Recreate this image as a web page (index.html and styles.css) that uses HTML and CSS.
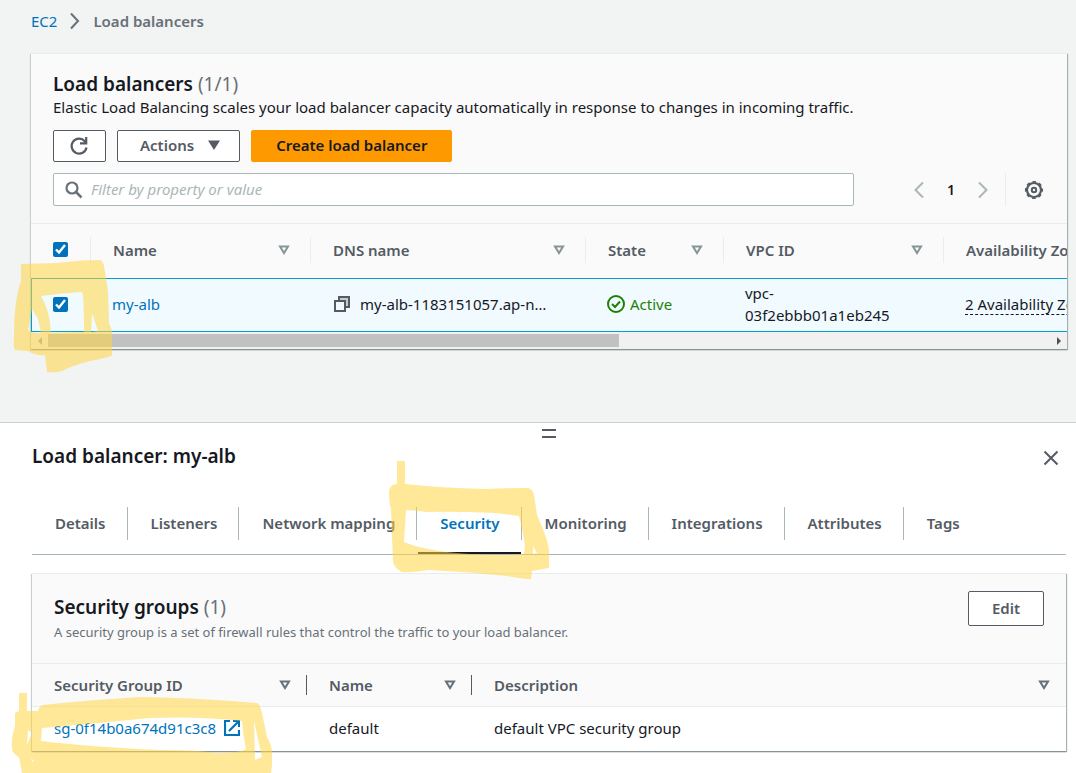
FILE: index.html
```html
<!DOCTYPE html>
<html lang="en">
<head>
<meta charset="utf-8">
<title>Load balancers</title>
<link rel="stylesheet" href="styles.css">
</head>
<body>
<svg class="defs" aria-hidden="true">
  <symbol id="sort" viewBox="0 0 12 10"><path d="M2 1.500h8L6 8z" fill="none" stroke="currentColor" stroke-width="2"/></symbol>
</svg>
<div class="page">
  <main class="main">
    <nav class="breadcrumb" aria-label="Breadcrumb">
      <a href="#">EC2</a>
      <svg width="10" height="18" viewBox="0 0 10 18" aria-hidden="true"><path d="M1 1.500l7 7.500-7 7.500" fill="none" stroke="#687078" stroke-width="2"/></svg>
      <span class="current">Load balancers</span>
    </nav>

    <section class="card balancers">
      <header class="card-head">
        <h1 class="title">Load balancers <span class="count">(1/1)</span></h1>
        <p class="lead">Elastic Load Balancing scales your load balancer capacity automatically in response to changes in incoming traffic.</p>
        <div class="actions">
          <button class="btn refresh" aria-label="Refresh">
            <svg width="20" height="20" viewBox="0 0 20 20" aria-hidden="true"><path d="M17.500 11.500A7.500 7.500 0 1 1 15.800 5.200L17 7" fill="none" stroke="#545b64" stroke-width="2.200"/><path d="M17.200 1v6.300H11" fill="none" stroke="#545b64" stroke-width="2.200"/></svg>
          </button>
          <button class="btn menu">Actions
            <svg width="12" height="10" viewBox="0 0 12 10" aria-hidden="true"><path d="M0 .5h12L6 10z" fill="#545b64"/></svg>
          </button>
          <button class="btn primary">Create load balancer</button>
        </div>
        <div class="tools">
          <label class="filter">
            <svg width="18" height="18" viewBox="0 0 18 18" aria-hidden="true"><circle cx="7" cy="7" r="5.500" fill="none" stroke="#687078" stroke-width="2.200"/><path d="M11 11l5.500 5.500" stroke="#687078" stroke-width="2.500"/></svg>
            <input type="text" placeholder="Filter by property or value" aria-label="Filter by property or value">
          </label>
          <div class="pager">
            <button class="icon-btn" aria-label="Previous page"><svg width="12" height="18" viewBox="0 0 12 18"><path d="M10 1.500L2.500 9l7.500 7.500" fill="none" stroke="#aab7b8" stroke-width="2"/></svg></button>
            <span class="page-no">1</span>
            <button class="icon-btn" aria-label="Next page"><svg width="12" height="18" viewBox="0 0 12 18"><path d="M2 1.500L9.500 9 2 16.500" fill="none" stroke="#aab7b8" stroke-width="2"/></svg></button>
          </div>
          <button class="icon-btn settings" aria-label="Preferences">
            <svg width="20" height="20" viewBox="0 0 20 20"><circle cx="10" cy="10" r="7" fill="none" stroke="#545b64" stroke-width="2.200"/><circle cx="10" cy="10" r="8.300" fill="none" stroke="#545b64" stroke-width="1.600" stroke-dasharray="3.500 3.020" stroke-dashoffset="1.750"/><circle cx="10" cy="10" r="2.200" fill="none" stroke="#545b64" stroke-width="2"/></svg>
          </button>
        </div>
      </header>
      <div class="scroll">
        <table class="grid wide">
          <colgroup><col class="c-check"><col class="c-name"><col class="c-dns"><col class="c-state"><col class="c-vpc"><col class="c-zone"></colgroup>
          <thead>
            <tr>
              <th><div class="cell"><input type="checkbox" checked aria-label="Select all"></div></th>
              <th><div class="cell">Name<svg class="sort"><use href="#sort"/></svg></div></th>
              <th><div class="cell">DNS name<svg class="sort"><use href="#sort"/></svg></div></th>
              <th><div class="cell">State<svg class="sort"><use href="#sort"/></svg></div></th>
              <th><div class="cell">VPC ID<svg class="sort"><use href="#sort"/></svg></div></th>
              <th><div class="cell">Availability Zones</div></th>
            </tr>
          </thead>
          <tbody>
            <tr>
              <td><input type="checkbox" checked aria-label="Select my-alb"></td>
              <td><a href="#">my-alb</a></td>
              <td><span class="with-icon dns"><svg width="16" height="16" viewBox="0 0 16 16" aria-hidden="true"><path d="M5 1h10v10h-4V5H5z" fill="#c8ccd0" stroke="#545b64" stroke-width="2"/><path d="M1 5h10v10H1z" fill="none" stroke="#545b64" stroke-width="2"/></svg>my-alb-1183151057.ap-n…</span></td>
              <td><span class="with-icon active"><svg width="18" height="18" viewBox="0 0 18 18" aria-hidden="true"><circle cx="9" cy="9" r="8" fill="none" stroke="#1d8102" stroke-width="2"/><path d="M5 9l3 3 5-5.500" fill="none" stroke="#1d8102" stroke-width="2"/></svg>Active</span></td>
              <td>vpc-<br>03f2ebbb01a1eb245</td>
              <td><span class="dashed">2 Availability Zones</span></td>
            </tr>
          </tbody>
        </table>
      </div>
      <div class="scrollbar" aria-hidden="true"><i class="arrow left"></i><span class="track"><span class="thumb"></span></span><i class="arrow right"></i></div>
      <svg class="marker marker-row" width="100" height="114" viewBox="13 258 100 114" aria-hidden="true"><path fill-rule="evenodd" d="M21 263L58 262Q80 259 100 259Q103 260 104 265L108 290L109 322L112 330V354Q111 356 90 360Q74 364 62 370Q55 372 47 371L45 354Q36 355 28 350L15 349Q13 347 14 335Q14 300 21 280ZM41 295Q62 292 82 291Q84 295 84 331L51 332Q50 310 41 295ZM32 308L38 318 41 332Q32 333 28 329ZM92 312L98 330 91 331Z"/></svg>
    </section>
  </main>

  <section class="panel">
    <div class="handle" aria-hidden="true"></div>
    <header class="panel-head">
      <h2 class="title">Load balancer: my-alb</h2>
      <button class="icon-btn close" aria-label="Close"><svg width="16" height="16" viewBox="0 0 16 16"><path d="M1.500 1.500l13 13M14.500 1.500l-13 13" stroke="#545b64" stroke-width="2"/></svg></button>
    </header>
    <nav class="tabs" role="tablist">
      <button class="tab" role="tab">Details</button>
      <button class="tab" role="tab">Listeners</button>
      <button class="tab" role="tab">Network mapping</button>
      <button class="tab selected" role="tab" aria-selected="true">Security</button>
      <button class="tab" role="tab">Monitoring</button>
      <button class="tab" role="tab">Integrations</button>
      <button class="tab" role="tab">Attributes</button>
      <button class="tab" role="tab">Tags</button>
      <svg class="marker marker-tab" width="162" height="120" viewBox="388 460 162 120" aria-hidden="true"><path fill-rule="evenodd" d="M397 461H405V484Q440 488 485 489Q510 488 528 488Q533 489 534 495L537 515Q549 542 549 551V568L532 571 531 579Q524 579 507 576Q470 572 428 570Q410 573 402 572Q395 569 393 562L391 508Q389 505 389 490Q391 484 397 484ZM406 510Q420 511 427 512Q490 511 519 516Q523 530 525 546L524 554Q500 556 470 554Q425 551 404 542ZM533 546L537 553 533 554Z"/></svg>
    </nav>

    <section class="card groups">
      <header class="groups-head">
        <div>
          <h2 class="title">Security groups <span class="count">(1)</span></h2>
          <p class="note">A security group is a set of firewall rules that control the traffic to your load balancer.</p>
        </div>
        <button class="btn edit">Edit</button>
      </header>
      <table class="grid small">
        <colgroup><col class="g-id"><col class="g-name"><col></colgroup>
        <thead>
          <tr>
            <th><div class="cell">Security Group ID<svg class="sort"><use href="#sort"/></svg></div></th>
            <th><div class="cell">Name<svg class="sort"><use href="#sort"/></svg></div></th>
            <th><div class="cell">Description<svg class="sort"><use href="#sort"/></svg></div></th>
          </tr>
        </thead>
        <tbody>
          <tr>
            <td><a class="with-icon external" href="#">sg-0f14b0a674d91c3c8<svg width="16" height="16" viewBox="0 0 16 16" aria-hidden="true"><path d="M6 1H1v14h14v-5M9 1h6v6M15 1L5 11" fill="none" stroke="#0073bb" stroke-width="2.200"/></svg></a></td>
            <td>default</td>
            <td>default VPC security group</td>
          </tr>
        </tbody>
      </table>
      <svg class="marker marker-group" width="262" height="81" viewBox="11 692 262 81" aria-hidden="true"><path fill-rule="evenodd" d="M19 693H27V711H38Q39 706 43 705Q90 700 140 697Q200 698 257 703Q260 704 262 713L267 737Q271 744 272 750V765L271 773H22L19 757Q12 754 12 748Q11 738 15 726V713L19 711ZM42 728Q90 724 150 718Q200 716 242 721Q243 735 246 749Q240 753 215 753Q200 750 160 750Q90 747 41 741ZM254 721L262 757 255 760ZM28 730L32 733 27 745ZM30 757L34 761 33 762Z"/></svg>
    </section>
  </section>
</div>
</body>
</html>
```
FILE: styles.css
```css
* { box-sizing: border-box; }
body {
  margin: 0;
  background: #fff;
  color: #16191f;
  font-family: "Noto Sans", "Open Sans", sans-serif;
  font-size: 15px;
  line-height: 22px;
}
h1, h2, p { margin: 0; }
button, input { font: inherit; margin: 0; }
button { cursor: pointer; }
svg { display: block; flex: none; }
a { color: #0073bb; text-decoration: none; }
.defs { display: none; }
.page { min-height: 100vh; display: flex; flex-direction: column; overflow: hidden; }

.main { background: #f2f3f3; padding: 0 9px 73px 31px; }
.breadcrumb { display: flex; align-items: center; gap: 13px; padding: 10px 0 21px; }
.breadcrumb .current { color: #687078; font-weight: 600; }

.card {
  position: relative;
  background: #fafafa;
  border-top: 1px solid #eaeded;
  box-shadow: 0 1px 1px #879596, 1px 1px 1px #aab7b8, -1px 1px 1px #d5dbdb;
}
.title { font-size: 19px; line-height: 24px; font-weight: 600; }
.count { color: #687078; font-weight: 400; }

.card-head { padding: 18px 22px 17px; }
.lead { line-height: 22px; }
.actions { display: flex; gap: 11px; margin-top: 12px; }
.btn {
  display: flex;
  align-items: center;
  justify-content: center;
  height: 32px;
  padding: 0 23px 2px;
  background: #fff;
  border: 1px solid #545b64;
  border-radius: 2px;
  color: #545b64;
  font-weight: 600;
}
.refresh { padding: 0 16px 0 15px; }
.menu { gap: 14px; padding-left: 22px; padding-right: 19px; }
.primary { padding: 0 24px 2px; background: #f90; border-color: #f90; color: #16191f; }

.tools { display: flex; align-items: center; margin-top: 11px; }
.filter {
  flex: 1;
  display: flex;
  align-items: center;
  gap: 8px;
  height: 33px;
  padding: 0 11px;
  background: #fff;
  border: 1px solid #aab7b8;
  border-radius: 2px;
}
.filter input { flex: 1; min-width: 0; border: 0; padding: 0 0 2px; outline: 0; background: none; color: #16191f; }
.filter input::placeholder { color: #aab7b8; font-style: italic; opacity: 1; }
.icon-btn { border: 0; background: none; padding: 0; }
.pager { display: flex; align-items: center; gap: 22px; margin-left: 59px; padding-right: 16px; }
.page-no { font-size: 14px; font-weight: 600; }
.settings { display: flex; align-items: center; height: 33px; padding: 0 1px 0 18px; border-left: 1px solid #eaeded; }

.scroll { overflow: hidden; }
.grid { table-layout: fixed; border-collapse: separate; border-spacing: 0; text-align: left; }
.grid th { padding: 0; color: #545b64; font-weight: 600; }
.grid .cell { display: flex; align-items: center; justify-content: space-between; }
.sort { width: 12px; height: 10px; color: #879596; }

.wide { width: 1133px; }
.wide th { height: 55px; padding-bottom: 3px; border-top: 1px solid #eaeded; }
.wide .cell { height: 26px; padding: 0 20px 0 22px; border-right: 1px solid #eaeded; }
.wide td {
  height: 54px;
  padding: 3px 21px 5px;
  background: #f1faff;
  border-top: 1px solid #00a1c9;
  border-bottom: 1px solid #00a1c9;
}
.wide td:first-child { border-left: 1px solid #00a1c9; }
.c-check { width: 60px; }
.c-name { width: 220px; }
.c-dns { width: 275px; }
.c-state { width: 138px; }
.c-vpc { width: 220px; }
.c-zone { width: 220px; }

input[type="checkbox"] { display: block; width: 15px; height: 15px; accent-color: #0073bb; }
.with-icon { display: flex; align-items: center; gap: 5px; }
.dns { gap: 10px; padding-left: 2px; }
.active { color: #1d8102; }
.dashed { border-bottom: 1px dashed #16191f; }

.scrollbar { display: flex; align-items: center; height: 17px; background: #f1f1f1; }
.arrow { width: 17px; display: flex; justify-content: center; }
.arrow::before { content: ""; border: 4px solid transparent; }
.arrow.left::before { border-left: 0; border-right-color: #a3a3a3; }
.arrow.right::before { border-right: 0; border-left-color: #505050; }
.track { flex: 1; height: 13px; }
.thumb { display: block; width: 57%; height: 100%; background: #c1c1c1; }

.panel { flex: 1; border-top: 1px solid #c8d0d1; padding: 6px 10px 21px 32px; }
.handle { width: 14px; height: 9px; margin: 0 auto; border: solid #545b64; border-width: 2px 0; }
.panel-head { display: flex; align-items: center; justify-content: space-between; padding: 6px 7px 0 0; }
.close { padding-top: 4px; }
.tabs { position: relative; display: flex; margin-top: 33px; border-bottom: 1px solid #aab7b8; }
.tab {
  position: relative;
  padding: 11px 22px 20px 23px;
  border: 0;
  background: none;
  color: #545b64;
  font-weight: 600;
  line-height: 22px;
  white-space: nowrap;
}
.tab:not(:nth-child(8))::after {
  content: "";
  position: absolute;
  right: 0;
  top: 6px;
  height: 33px;
  border-right: 1px solid #aab7b8;
}
.tab.selected { color: #0073bb; }
.tab.selected::before { content: ""; position: absolute; left: 1px; right: 1px; bottom: 0; height: 2px; background: #16191f; }

.groups { margin-top: 18px; }
.groups-head { display: flex; justify-content: space-between; align-items: flex-start; padding: 17px 22px; }
.groups-head .title { padding-top: 4px; }
.note { font-size: 13px; line-height: 27px; color: #687078; }
.edit { height: 35px; }
.small { width: 100%; }
.small th { height: 44px; border: solid #eaeded; border-width: 1px 0; }
.small .cell { height: 20px; padding: 0 15px 0 22px; border-right: 1px solid #545b64; }
.small th:last-child .cell { border-right: 0; padding-right: 16px; }
.small .sort { color: #687078; }
.small td { height: 44px; padding: 0 22px 2px; background: #fff; }
.external { gap: 8px; }
.g-id { width: 275px; }
.g-name { width: 165px; }

.marker { position: absolute; z-index: 1; pointer-events: none; fill: rgba(255, 214, 66, .55); }
.marker-row { left: -18px; top: 205px; }
.marker-tab { left: 356px; top: -41px; }
.marker-group { left: -21px; top: 118px; }
```
